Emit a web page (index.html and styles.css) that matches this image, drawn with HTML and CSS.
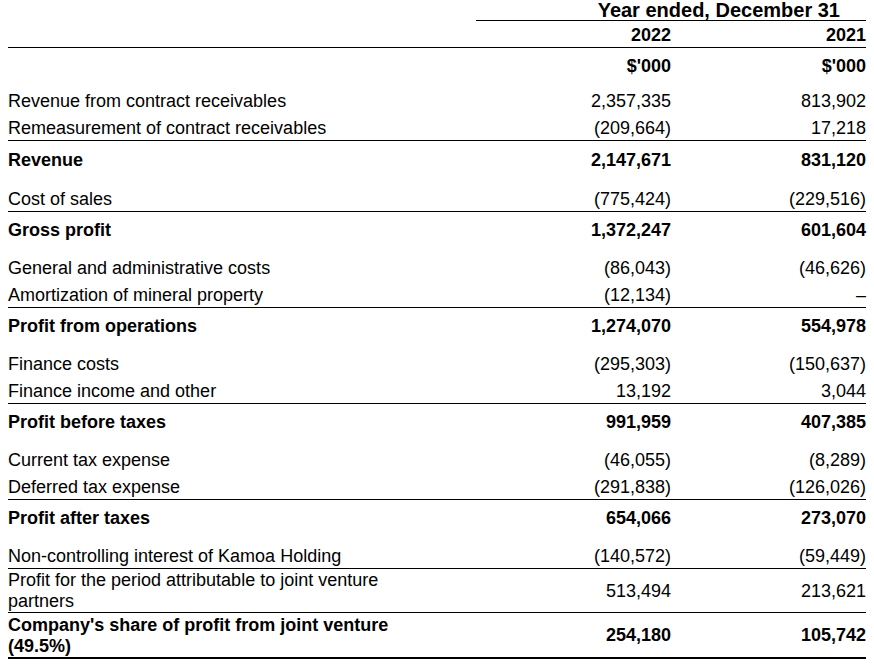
FILE: index.html
```html
<!DOCTYPE html>
<html lang="en">
<head>
<meta charset="utf-8">
<title>Kamoa Copper – Income statement</title>
<link rel="stylesheet" href="styles.css">
</head>
<body>
<div class="sheet">
  <div class="row head-top">
    <div class="label"></div>
    <div class="period">Year ended, December 31</div>
  </div>
  <div class="row years ruled">
    <div class="label"></div>
    <div class="num bold">2022</div>
    <div class="num bold">2021</div>
  </div>
  <div class="row units">
    <div class="label"></div>
    <div class="num bold">$'000</div>
    <div class="num bold">$'000</div>
  </div>

  <div class="row first">
    <div class="label">Revenue from contract receivables</div>
    <div class="num">2,357,335</div>
    <div class="num">813,902</div>
  </div>
  <div class="row ruled">
    <div class="label">Remeasurement of contract receivables</div>
    <div class="num">(209,664)</div>
    <div class="num">17,218</div>
  </div>
  <div class="row total wide">
    <div class="label">Revenue</div>
    <div class="num">2,147,671</div>
    <div class="num">831,120</div>
  </div>

  <div class="row lead ruled wide">
    <div class="label">Cost of sales</div>
    <div class="num">(775,424)</div>
    <div class="num">(229,516)</div>
  </div>
  <div class="row total">
    <div class="label">Gross profit</div>
    <div class="num">1,372,247</div>
    <div class="num">601,604</div>
  </div>

  <div class="row lead">
    <div class="label">General and administrative costs</div>
    <div class="num">(86,043)</div>
    <div class="num">(46,626)</div>
  </div>
  <div class="row ruled">
    <div class="label">Amortization of mineral property</div>
    <div class="num">(12,134)</div>
    <div class="num">–</div>
  </div>
  <div class="row total">
    <div class="label">Profit from operations</div>
    <div class="num">1,274,070</div>
    <div class="num">554,978</div>
  </div>

  <div class="row lead">
    <div class="label">Finance costs</div>
    <div class="num">(295,303)</div>
    <div class="num">(150,637)</div>
  </div>
  <div class="row ruled">
    <div class="label">Finance income and other</div>
    <div class="num">13,192</div>
    <div class="num">3,044</div>
  </div>
  <div class="row total">
    <div class="label">Profit before taxes</div>
    <div class="num">991,959</div>
    <div class="num">407,385</div>
  </div>

  <div class="row lead">
    <div class="label">Current tax expense</div>
    <div class="num">(46,055)</div>
    <div class="num">(8,289)</div>
  </div>
  <div class="row ruled">
    <div class="label">Deferred tax expense</div>
    <div class="num">(291,838)</div>
    <div class="num">(126,026)</div>
  </div>
  <div class="row total">
    <div class="label">Profit after taxes</div>
    <div class="num">654,066</div>
    <div class="num">273,070</div>
  </div>

  <div class="row lead ruled">
    <div class="label">Non-controlling interest of Kamoa Holding</div>
    <div class="num">(140,572)</div>
    <div class="num">(59,449)</div>
  </div>
  <div class="row double ruled">
    <div class="label wrap">Profit for the period attributable to joint venture partners</div>
    <div class="num mid">513,494</div>
    <div class="num mid">213,621</div>
  </div>
  <div class="row double final total">
    <div class="label wrap">Company's share of profit from joint venture (49.5%)</div>
    <div class="num mid">254,180</div>
    <div class="num mid">105,742</div>
  </div>
</div>
</body>
</html>
```

FILE: styles.css
```css
html, body {
  margin: 0;
  padding: 0;
  background: #ffffff;
}

body {
  font-family: "Liberation Sans", Arial, sans-serif;
  font-size: 18px;
  line-height: 20px;
  color: #000000;
}

.sheet {
  margin: 0 8px;
  width: 858px;
  display: flex;
  flex-direction: column;
}

.row {
  display: grid;
  grid-template-columns: 468px 195px 195px;
  align-items: end;
  box-sizing: border-box;
  height: 27px;
  border-bottom: 1px solid transparent;
}

.row > div {
  padding-bottom: 2px;
  white-space: nowrap;
}

.ruled {
  border-bottom-color: #000000;
}

.head-top {
  height: 21px;
  border-bottom: 0;
}

.head-top .period {
  grid-column: 2 / 4;
  font-size: 20px;
  font-weight: bold;
  text-align: right;
  padding: 0 26px 0 0;
  border-bottom: 1px solid #000000;
}

.years {
  height: 27px;
}

.units {
  height: 31px;
}

.first {
  height: 35px;
}

.total {
  height: 31px;
  font-weight: bold;
}

.total.wide {
  height: 32px;
}

.lead {
  height: 38px;
}

.lead.wide {
  height: 39px;
}

.bold {
  font-weight: bold;
}

.label {
  padding-left: 0;
}

.label.wrap {
  white-space: normal;
  width: 430px;
  line-height: 21px;
  padding-bottom: 0;
}

.num {
  text-align: right;
}

.num.mid {
  align-self: center;
  padding-bottom: 0;
}

.double {
  height: 44px;
}

.final {
  height: 46px;
  border-bottom: 2px solid #000000;
}
```
